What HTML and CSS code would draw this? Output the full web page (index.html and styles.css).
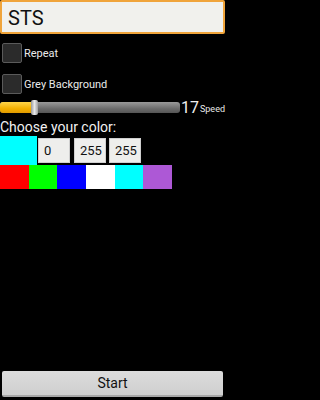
FILE: index.html
```html
<!DOCTYPE html>
<html>
<head>
<meta charset="utf-8">
<link rel="stylesheet" href="styles.css">
</head>
<body>
<div class="app">
  <div class="title">STS</div>
  <div class="check-row first"><span class="box"></span><span class="label">Repeat</span></div>
  <div class="check-row"><span class="box"></span><span class="label">Grey Background</span></div>
  <div class="slider-row">
    <div class="track">
      <div class="fill"></div>
      <div class="thumb"></div>
    </div>
    <span class="value">17</span><span class="unit">Speed</span>
  </div>
  <div class="choose">Choose your color:</div>
  <div class="color-row">
    <div class="preview"></div>
    <div class="num">0</div>
    <div class="num">255</div>
    <div class="num">255</div>
  </div>
  <div class="swatches">
    <div class="sw red"></div>
    <div class="sw green"></div>
    <div class="sw blue"></div>
    <div class="sw white"></div>
    <div class="sw cyan"></div>
    <div class="sw purple"></div>
  </div>
  <div class="start">Start</div>
</div>
</body>
</html>
```
FILE: styles.css
```css
html, body {
  margin: 0;
  padding: 0;
  background: #000;
}
.app {
  width: 225px;
  height: 400px;
  display: flex;
  flex-direction: column;
  font-family: Roboto, "Liberation Sans", sans-serif;
  color: #eee;
  box-sizing: border-box;
}
.title {
  height: 34px;
  box-sizing: border-box;
  border: 2px solid #f0a43a;
  border-radius: 2px;
  background: #f1f1ed;
  color: #111;
  font-size: 20px;
  line-height: 32px;
  padding-left: 6px;
}
.check-row {
  display: flex;
  align-items: center;
  gap: 2px;
  height: 20px;
  margin-top: 11px;
  padding-left: 2px;
}
.check-row.first {
  margin-top: 9px;
}
.box {
  width: 20px;
  height: 20px;
  box-sizing: border-box;
  border: 1px solid #5a5a5a;
  border-radius: 2px;
  background: #2b2b2b;
}
.label {
  font-size: 11px;
  color: #eaeaea;
}
.slider-row {
  display: flex;
  align-items: center;
  margin-top: 6px;
  height: 14px;
}
.track {
  position: relative;
  width: 182px;
  height: 11px;
  border-radius: 3px;
  background: linear-gradient(#9a9a9a, #6c6c6c 60%, #555);
}
.fill {
  position: absolute;
  left: 0;
  top: 0;
  width: 33px;
  height: 11px;
  border-radius: 3px 0 0 3px;
  background: linear-gradient(#ffd54a, #f4b000 60%, #e09a00);
}
.thumb {
  position: absolute;
  left: 31px;
  top: -2px;
  width: 7px;
  height: 15px;
  border-radius: 2px;
  background: linear-gradient(90deg, #9a9a9a, #e8e8e8 50%, #a0a0a0);
}
.value {
  font-size: 16px;
  margin-left: 1px;
  color: #f0f0f0;
}
.unit {
  font-size: 9px;
  margin-top: 4px;
  margin-left: 1px;
  color: #e8e8e8;
}
.choose {
  font-size: 14px;
  line-height: 16px;
  margin-top: 5px;
  color: #f2f2f2;
}
.color-row {
  display: flex;
  align-items: center;
  height: 29px;
  margin-top: 1px;
}
.preview {
  width: 37px;
  height: 29px;
  background: #00ffff;
}
.num {
  width: 32px;
  height: 25px;
  box-sizing: border-box;
  background: #eeeeec;
  border: 1px solid #cfcfcf;
  color: #111;
  font-size: 13px;
  line-height: 23px;
  padding-left: 5px;
  margin-right: 3px;
}
.preview + .num {
  margin-left: 1px;
  margin-right: 4px;
}
.swatches {
  display: flex;
  height: 24px;
  width: 172px;
}
.sw {
  flex: 1;
}
.red { background: #ff0000; }
.green { background: #00ff00; }
.blue { background: #0000ff; }
.white { background: #ffffff; }
.cyan { background: #00ffff; }
.purple { background: #ad58d6; }
.start {
  margin: auto 2px 3px 2px;
  height: 26px;
  box-sizing: border-box;
  border-radius: 2px;
  background: linear-gradient(#dcdcdc, #cfcfcf);
  border-bottom: 2px solid #a8a8a8;
  color: #111;
  font-size: 14px;
  line-height: 25px;
  text-align: center;
}
```
